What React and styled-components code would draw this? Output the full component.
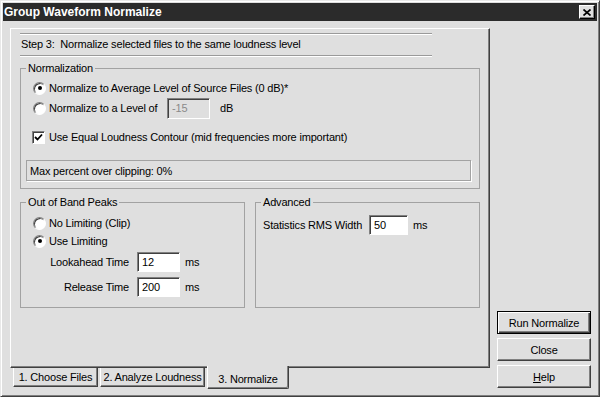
import React from "react";
import styled, { createGlobalStyle } from "styled-components";

const FACE = "#dfdfdf";

const GlobalStyle = createGlobalStyle`
  html, body {
    margin: 0;
    padding: 0;
    background: ${FACE};
  }
  body {
    font-family: "Liberation Sans", Tahoma, Arial, sans-serif;
    font-size: 11px;
    letter-spacing: -0.18px;
    color: #000;
  }
  * {
    box-sizing: border-box;
  }
`;

const Window = styled.div`
  width: 600px;
  height: 397px;
  background: ${FACE};
  border: 1px solid;
  border-color: #e8e8e8 #404040 #404040 #e8e8e8;
  box-shadow: inset 1px 1px #fff, inset -1px -1px #808080;
  padding: 2px;
  display: flex;
  flex-direction: column;
`;

const TitleBar = styled.div`
  height: 18px;
  background: #2b2b2b;
  color: #fff;
  font-weight: bold;
  font-size: 12px;
  letter-spacing: 0;
  display: flex;
  align-items: center;
  justify-content: space-between;
  padding: 0 2px 0 1px;
`;

const CloseBox = styled.button`
  width: 16px;
  height: 14px;
  padding: 0;
  background: ${FACE};
  border: 1px solid;
  border-color: #fff #000 #000 #fff;
  box-shadow: inset -1px -1px #808080;
  display: flex;
  align-items: center;
  justify-content: center;
`;

const Body = styled.div`
  flex: 1;
  display: flex;
  gap: 7px;
  padding: 7px 6px 6px 7px;
`;

const LeftCol = styled.div`
  width: 480px;
  display: flex;
  flex-direction: column;
`;

const Panel = styled.div`
  height: 340px;
  border: 1px solid;
  border-color: #fff #404040 #404040 #fff;
  box-shadow: inset -1px -1px #808080;
  padding: 4px 9px 0 9px;
`;

const StepHeader = styled.div`
  width: 412px;
  height: 23px;
  border-top: 1px solid #9a9a9a;
  border-bottom: 1px solid #9a9a9a;
  box-shadow: inset 0 1px #fff, 0 1px #fff;
  line-height: 21px;
  padding-left: 1px;
  white-space: pre;
`;

const Group = styled.fieldset`
  margin: ${(p) => p.$mt || 0}px 0 0 0;
  padding: ${(p) => p.$pt || 4}px 8px ${(p) => p.$pb || 7}px 5px;
  border: 1px solid #a2a2a2;
  min-width: 0;
  flex: 1;
  display: flex;
  flex-direction: column;
`;

const Legend = styled.legend`
  padding: 0 2px;
  line-height: 12px;
  font-size: 11px;
`;

const GroupRow = styled.div`
  display: flex;
  gap: 10px;
  margin-top: 7px;
`;

const OptionRow = styled.label`
  display: flex;
  align-items: center;
  height: ${(p) => p.$h || 20}px;
  margin-top: ${(p) => p.$mt || 0}px;
  padding-left: 7px;
  gap: 3px;
`;

const Radio = styled.span`
  width: 13px;
  height: 13px;
  border-radius: 50%;
  background: #fff;
  border: 1px solid;
  border-color: #808080 #fff #fff #808080;
  box-shadow: inset 1px 1px #404040;
  display: flex;
  align-items: center;
  justify-content: center;
  flex: none;

  &::after {
    content: "";
    display: ${(p) => (p.$checked ? "block" : "none")};
    width: 4px;
    height: 4px;
    border-radius: 50%;
    background: #000;
  }
`;

const CheckBox = styled.span`
  width: 13px;
  height: 13px;
  background: #fff;
  border: 1px solid;
  border-color: #808080 #fff #fff #808080;
  box-shadow: inset 1px 1px #404040;
  display: flex;
  align-items: center;
  justify-content: center;
  margin-left: -1px;
  margin-right: 1px;
  flex: none;
`;

const LevelLabel = styled.span`
  width: 115px;
`;

const Field = styled.div`
  width: ${(p) => p.$w}px;
  height: ${(p) => p.$h || 20}px;
  background: ${(p) => (p.$disabled ? FACE : "#fff")};
  color: ${(p) => (p.$disabled ? "#8a8a8a" : "#000")};
  border: 1px solid;
  border-color: #808080 #fff #fff #808080;
  box-shadow: inset 1px 1px #404040;
  padding-left: 4px;
  display: flex;
  align-items: center;
  flex: none;
`;

const Unit = styled.span`
  margin-left: ${(p) => p.$ml || 5}px;
`;

const StatusBox = styled.div`
  margin-top: 13px;
  height: 21px;
  border: 1px solid #a2a2a2;
  box-shadow: 1px 1px #fff;
  padding-left: 3px;
  display: flex;
  align-items: center;
`;

const TimeGrid = styled.div`
  display: grid;
  grid-template-columns: 96px 43px auto;
  column-gap: 8px;
  row-gap: 5px;
  padding-left: 7px;
  margin-top: 2px;
  align-items: center;
`;

const TimeLabel = styled.span`
  text-align: right;
`;

const TimeUnit = styled.span`
  margin-left: -3px;
`;

const AdvRow = styled.div`
  display: flex;
  align-items: center;
  margin-top: 1px;
  padding-left: 2px;
`;

const AdvLabel = styled.span`
  width: 106px;
`;

const TabRow = styled.div`
  display: flex;
  align-items: flex-start;
  gap: 2px;
  padding-left: 3px;
  height: 20px;
`;

const Tab = styled.div`
  width: ${(p) => p.$w}px;
  height: ${(p) => (p.$active ? 23 : 19)}px;
  margin-top: ${(p) => (p.$active ? -2 : 0)}px;
  background: ${FACE};
  border-left: 1px solid #fff;
  border-right: 1px solid #404040;
  border-bottom: 1px solid #404040;
  border-bottom-right-radius: ${(p) => (p.$active ? 2 : 0)}px;
  box-shadow: inset -1px -1px #808080;
  display: flex;
  align-items: center;
  justify-content: center;
  padding-top: ${(p) => (p.$active ? 4 : 0)}px;
  white-space: nowrap;
`;

const ButtonCol = styled.div`
  width: 94px;
  display: flex;
  flex-direction: column;
  justify-content: flex-end;
  gap: 4px;
`;

const Button = styled.button`
  width: 94px;
  height: 23px;
  padding: 0;
  font-family: inherit;
  font-size: 11px;
  letter-spacing: inherit;
  color: #000;
  background: ${FACE};
  border: 1px solid;
  border-color: ${(p) => (p.$default ? "#000" : "#fff #404040 #404040 #fff")};
  box-shadow: ${(p) =>
    p.$default
      ? "inset 1px 1px #fff, inset -1px -1px #404040, inset -2px -2px #808080"
      : "inset -1px -1px #808080"};
`;

function CloseGlyph() {
  return (
    <svg width="8" height="7" viewBox="0 0 8 7">
      <path d="M0.5 0.5 L7.5 6.5 M7.5 0.5 L0.5 6.5" stroke="#000" strokeWidth="1.7" />
    </svg>
  );
}

function CheckGlyph() {
  return (
    <svg width="9" height="9" viewBox="0 0 9 9">
      <path d="M1 4 L3.5 6.5 L8 1.5" fill="none" stroke="#000" strokeWidth="1.8" />
    </svg>
  );
}

const tabs = [
  { label: "1. Choose Files", w: 85 },
  { label: "2. Analyze Loudness", w: 105 },
  { label: "3. Normalize", w: 82, active: true },
];

export default function App() {
  return (
    <>
      <GlobalStyle />
      <Window>
        <TitleBar>
          <span>Group Waveform Normalize</span>
          <CloseBox>
            <CloseGlyph />
          </CloseBox>
        </TitleBar>
        <Body>
          <LeftCol>
            <Panel>
              <StepHeader>Step 3:  Normalize selected files to the same loudness level</StepHeader>

              <Group $mt={6}>
                <Legend>Normalization</Legend>
                <OptionRow>
                  <Radio $checked />
                  Normalize to Average Level of Source Files (0 dB)*
                </OptionRow>
                <OptionRow>
                  <Radio />
                  <LevelLabel>Normalize to a Level of</LevelLabel>
                  <Field $w={43} $h={21} $disabled>
                    -15
                  </Field>
                  <Unit $ml={7}>dB</Unit>
                </OptionRow>
                <OptionRow $mt={9}>
                  <CheckBox>
                    <CheckGlyph />
                  </CheckBox>
                  Use Equal Loudness Contour (mid frequencies more important)
                </OptionRow>
                <StatusBox>Max percent over clipping: 0%</StatusBox>
              </Group>

              <GroupRow>
                <Group $pt={6} $pb={10}>
                  <Legend>Out of Band Peaks</Legend>
                  <OptionRow $h={18}>
                    <Radio />
                    No Limiting (Clip)
                  </OptionRow>
                  <OptionRow $h={18}>
                    <Radio $checked />
                    Use Limiting
                  </OptionRow>
                  <TimeGrid>
                    <TimeLabel>Lookahead Time</TimeLabel>
                    <Field $w={43}>12</Field>
                    <TimeUnit>ms</TimeUnit>
                    <TimeLabel>Release Time</TimeLabel>
                    <Field $w={43}>200</Field>
                    <TimeUnit>ms</TimeUnit>
                  </TimeGrid>
                </Group>
                <Group $pt={6} $pb={10}>
                  <Legend>Advanced</Legend>
                  <AdvRow>
                    <AdvLabel>Statistics RMS Width</AdvLabel>
                    <Field $w={39}>50</Field>
                    <Unit>ms</Unit>
                  </AdvRow>
                </Group>
              </GroupRow>
            </Panel>
            <TabRow>
              {tabs.map((t) => (
                <Tab key={t.label} $w={t.w} $active={t.active}>
                  {t.label}
                </Tab>
              ))}
            </TabRow>
          </LeftCol>
          <ButtonCol>
            <Button $default>Run Normalize</Button>
            <Button>Close</Button>
            <Button>
              <u>H</u>elp
            </Button>
          </ButtonCol>
        </Body>
      </Window>
    </>
  );
}
